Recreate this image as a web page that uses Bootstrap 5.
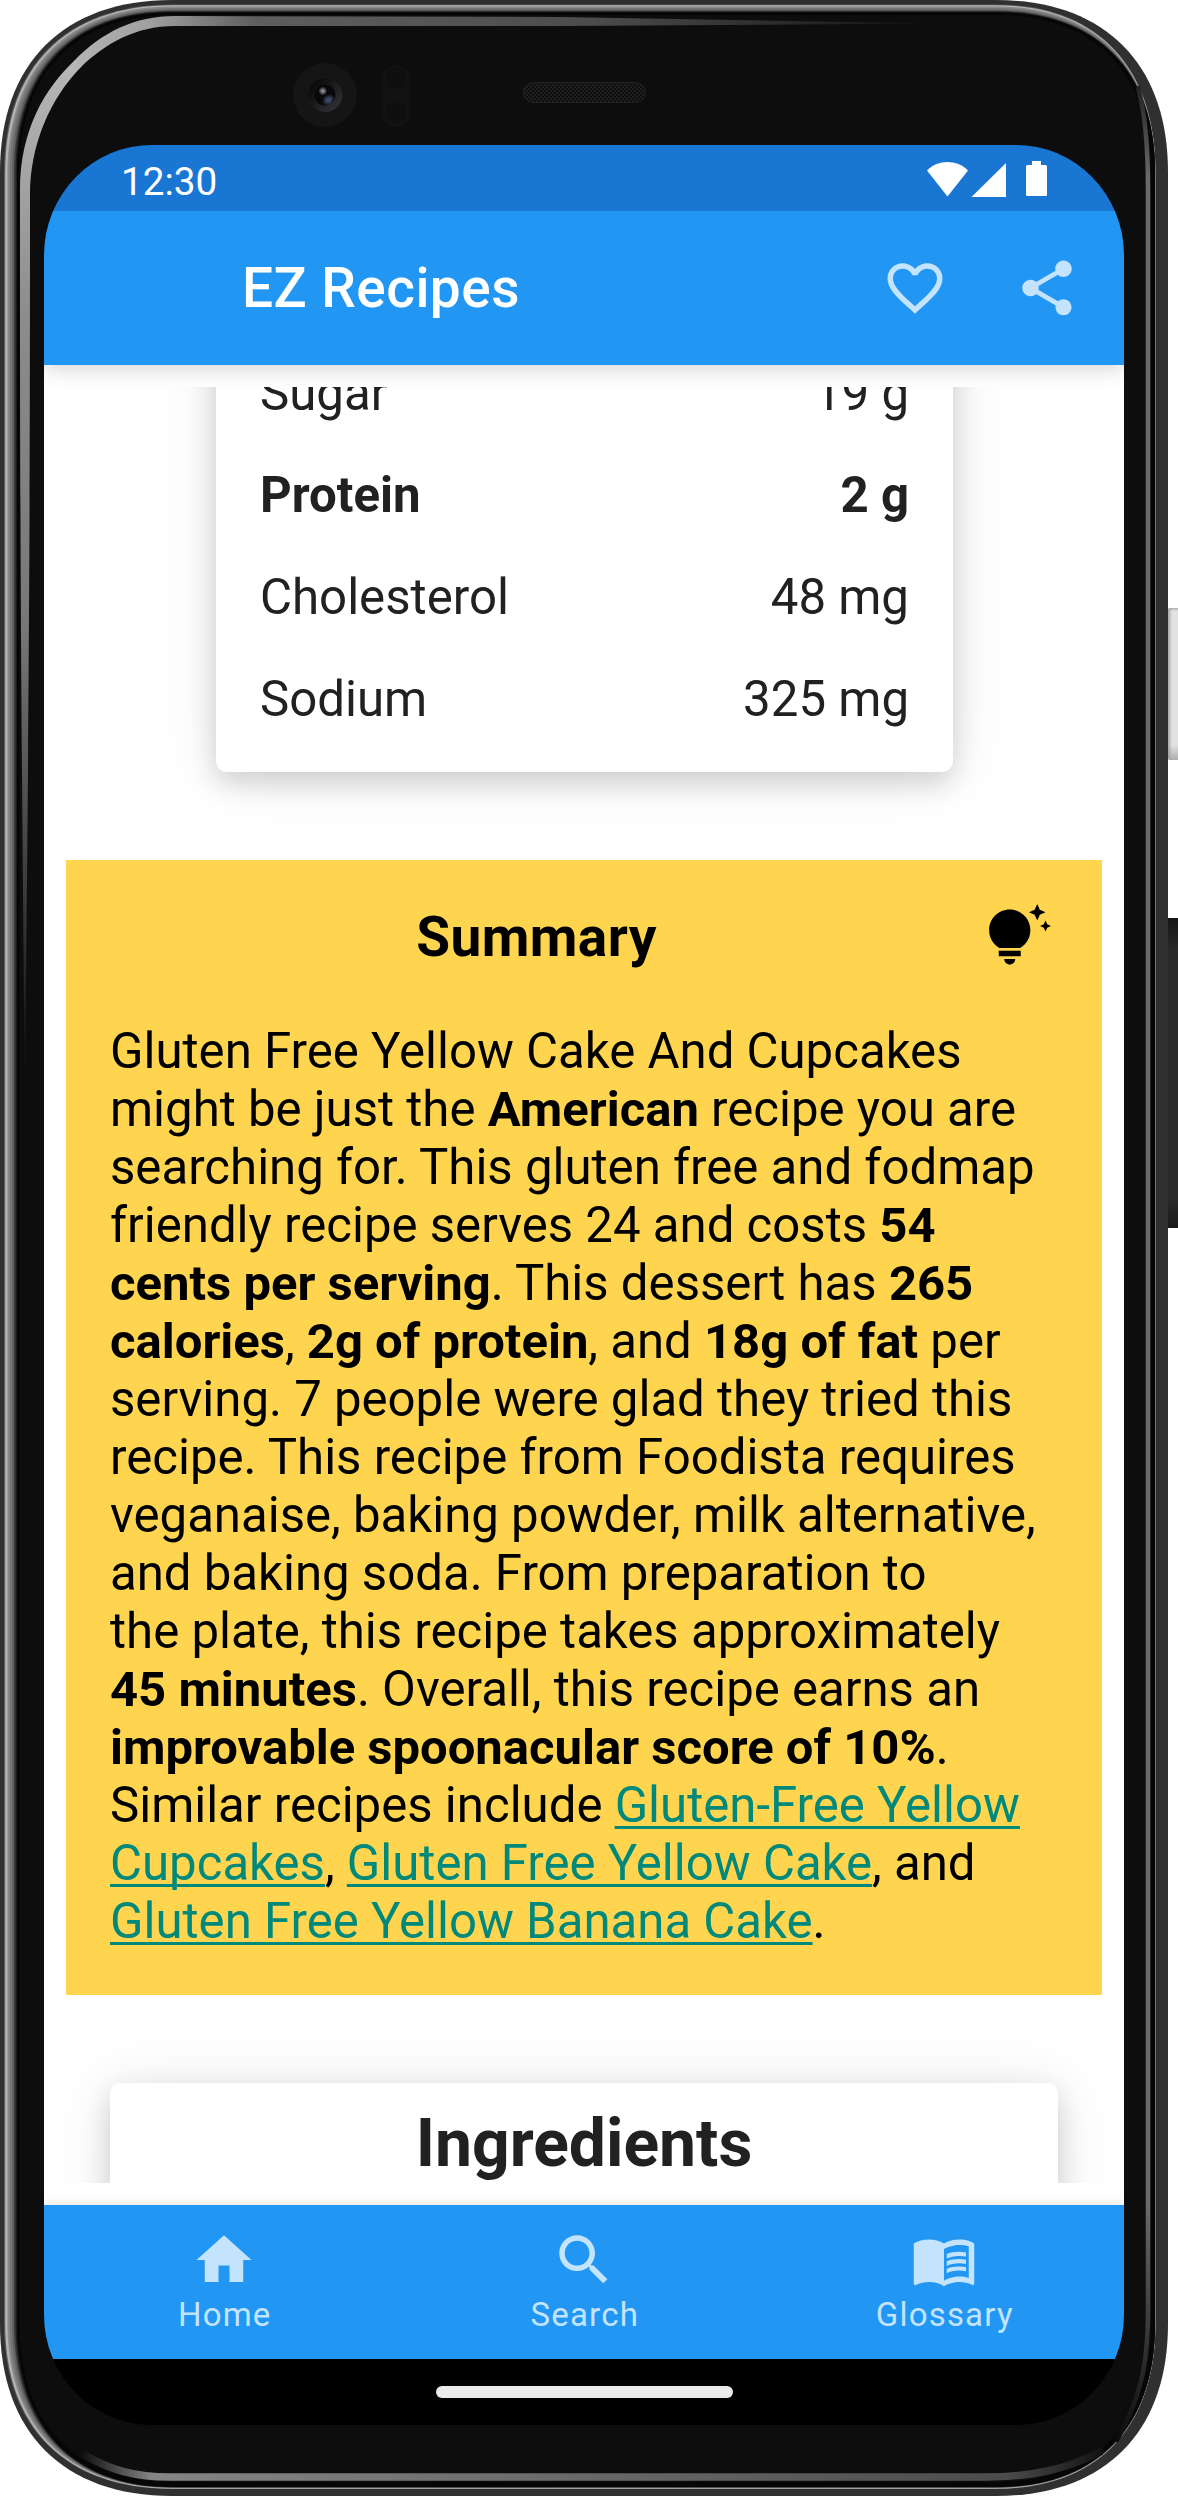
<!DOCTYPE html>
<html lang="en">
<head>
<meta charset="utf-8">
<meta name="viewport" content="width=device-width, initial-scale=1">
<title>EZ Recipes</title>
<link href="https://cdn.jsdelivr.net/npm/bootstrap@5.3.0/dist/css/bootstrap.min.css" rel="stylesheet">
<style>
html, body { margin: 0; overflow: hidden; background: #fff; }
body { font-family: Roboto, sans-serif; color: #212121; }
.stage { width: 1178px; height: 2496px; padding: 145px 54px 71px 44px; }
.device { left: 0; top: 0; }
.screen { width: 1080px; height: 2280px; border-radius: 108px / 110px; background: #000; z-index: 1; }
.status { height: 66px; background: #1976d2; color: #fff; padding: 6px 77px 0; font-size: 38.7px; line-height: 45px; }
.status svg { margin-top: -5px; }
.appbar { height: 154px; background: #2196f3; color: #fff; padding: 0 44px 0 198px; box-shadow: 0 2px 22px rgba(0,0,0,.2); clip-path: inset(0 0 -30px 0); }
.appbar-title { font-size: 55px; font-weight: 500; line-height: 64px; letter-spacing: .45px; }
.actions { gap: 66px; color: #c4e3fc; }
.content { height: 1840px; padding: 22px 0; }
.scroller { height: 1796px; padding: 0 22px; }
.elev { background: #fff; border-radius: 11px; box-shadow: 0 11px 27px rgba(0,0,0,.14), 0 3px 60px rgba(0,0,0,.1); }
.facts { width: 737px; height: 485px; margin-top: -100px; padding: 77px 43.5px 0 44.5px; font-size: 49.2px; line-height: 58px; }
.fact + .fact { margin-top: 44px; }
.summary { margin-top: 88px; height: 1135px; background: #ffd54f; color: #000; padding: 44px; }
.summary-head { height: 66px; margin-bottom: 51.5px; padding-right: 7px; }
.summary-title { font-size: 55px; font-weight: 700; line-height: 64px; letter-spacing: .4px; padding-right: 22px; }
.summary-text { font-size: 49.15px; line-height: 58px; white-space: nowrap; }
.summary-text b { font-size: 49px; line-height: 1; }
.summary-text a { color: #00897b; text-decoration-thickness: 3px; text-underline-offset: 4px; text-decoration-skip-ink: none; }
.ingredients { margin: 88px 44px 0; height: 200px; font-size: 66px; font-weight: 700; line-height: 77px; padding-top: 22px; }
.tabs { height: 154px; background: #2196f3; box-shadow: 0 -1px 10px rgba(0,0,0,.12); }
.tab { color: #c4e3fc; font-size: 33px; line-height: 39px; letter-spacing: 1.2px; padding-top: 22px; }
.tab svg { margin-bottom: 2px; }
.tab span { padding-left: 1.5px; }
.pill { width: 297px; height: 12px; border-radius: 6px; background: #ebebeb; }
.ico { width: 66px; height: 66px; fill: currentColor; flex: none; display: block; }
</style>
</head>
<body>
<div class="stage position-relative">

<svg class="device position-absolute" width="1178" height="2496" viewBox="0 0 1178 2496" aria-hidden="true">
  <defs>
    <linearGradient id="topfade" gradientUnits="userSpaceOnUse" x1="60" y1="0" x2="950" y2="0">
      <stop offset="0" stop-color="#b8b8b8"/><stop offset=".1" stop-color="#a0a0a0"/><stop offset=".22" stop-color="#5e5e5e"/><stop offset=".6" stop-color="#4c4c4c"/><stop offset="1" stop-color="#0d0d0e"/>
    </linearGradient>
    <linearGradient id="leftfade" gradientUnits="userSpaceOnUse" x1="0" y1="60" x2="0" y2="1090">
      <stop offset="0" stop-color="#b8b8b8"/><stop offset=".25" stop-color="#8c8c8c"/><stop offset=".55" stop-color="#777"/><stop offset="1" stop-color="#0d0d0e"/>
    </linearGradient>
    <linearGradient id="rightfade" gradientUnits="userSpaceOnUse" x1="0" y1="60" x2="0" y2="2440">
      <stop offset="0" stop-color="#0d0d0e"/><stop offset=".05" stop-color="#6b6b6b"/><stop offset=".9" stop-color="#6b6b6b"/><stop offset="1" stop-color="#0d0d0e"/>
    </linearGradient>
    <linearGradient id="botfade" gradientUnits="userSpaceOnUse" x1="80" y1="0" x2="1110" y2="0">
      <stop offset="0" stop-color="#0d0d0e"/><stop offset=".07" stop-color="#858585"/><stop offset=".5" stop-color="#686868"/><stop offset=".9" stop-color="#4c4c4c"/><stop offset="1" stop-color="#0d0d0e"/>
    </linearGradient>
    <linearGradient id="lens" x1="0" y1="0" x2="1" y2="1"><stop offset=".2" stop-color="#0c0c0d"/><stop offset="1" stop-color="#38383b"/></linearGradient>
    <radialGradient id="glint"><stop offset="0" stop-color="#aaa"/><stop offset="1" stop-color="#aaa" stop-opacity="0"/></radialGradient>
    <radialGradient id="blue"><stop offset=".3" stop-color="#3c4666"/><stop offset="1" stop-color="#3c4666" stop-opacity="0"/></radialGradient>
    <linearGradient id="keylight" x1="0" y1="0" x2="1" y2="0"><stop offset="0" stop-color="#a8a8a8"/><stop offset=".35" stop-color="#e2e2e2"/><stop offset="1" stop-color="#e0e0e0"/></linearGradient>
    <linearGradient id="keyends" x1="0" y1="0" x2="0" y2="1"><stop offset="0" stop-color="#999" stop-opacity=".7"/><stop offset=".02" stop-color="#999" stop-opacity="0"/><stop offset=".9" stop-color="#999" stop-opacity="0"/><stop offset="1" stop-color="#999" stop-opacity=".7"/></linearGradient>
    <linearGradient id="keydark" x1="0" y1="0" x2="0" y2="1"><stop offset="0" stop-color="#161616"/><stop offset=".1" stop-color="#2a2a2a"/><stop offset=".9" stop-color="#2a2a2a"/><stop offset="1" stop-color="#1a1a1a"/></linearGradient>
    <pattern id="mesh" width="4" height="4" patternUnits="userSpaceOnUse"><rect width="4" height="4" fill="#0e0e0e"/><rect width="2" height="2" fill="#202020"/><rect x="2" y="2" width="2" height="2" fill="#202020"/></pattern>
  </defs>
  <rect x="1168" y="608" width="12" height="152" rx="2" fill="url(#keylight)"/>
  <rect x="1168" y="608" width="12" height="152" rx="2" fill="url(#keyends)"/>
  <rect x="1160" y="918" width="20" height="310" rx="3" fill="url(#keydark)"/>
  <g id="shell"></g>
  <path fill="url(#leftfade)" d="M25 1090C20 620 20 420 20 190C20 130 45 88 75 60L82 66C50 98 30 145 30 195C30 420 30 620 25 1090Z"/>
  <path fill="url(#topfade)" d="M74.500 60.500C102 32 135 16 175 16L560 17L940 23.500L560 26L175 26C135 26 105 44 81.500 66.500Z"/>
  <g fill="none" stroke-linecap="round">
    <path stroke="url(#rightfade)" stroke-width="4.500" d="M1138 88C1146 115 1148 150 1148 190L1148 2310C1148 2365 1140 2400 1117 2440"/>
    <path stroke="url(#botfade)" stroke-width="7.500" d="M85 2455C110 2470 135 2477 170 2477L985 2477C1030 2477 1065 2470 1100 2452"/>
  </g>
  <circle cx="325" cy="95" r="32" fill="#151515"/>
  <circle cx="325.300" cy="95" r="17" fill="url(#lens)"/>
  <circle cx="325" cy="95" r="10.500" fill="#08080b"/>
  <ellipse cx="328.500" cy="100" rx="7" ry="5.500" fill="url(#blue)" transform="rotate(-35 328.500 100)"/>
  <circle cx="322.800" cy="91" r="4.500" fill="url(#glint)"/>
  <rect x="382" y="65" width="28" height="62" rx="14" fill="#121212"/>
  <circle cx="396" cy="78" r="11" fill="#0f0f0f"/><circle cx="396" cy="112" r="11" fill="#0f0f0f"/>
  <rect x="523.500" y="82.500" width="122" height="20" rx="10" fill="url(#mesh)" stroke="#222"/>
</svg>

<div class="screen position-relative d-flex flex-column overflow-hidden">
  <div class="status d-flex align-items-center justify-content-between">
    <span>12:30</span>
    <svg width="120" height="36" viewBox="0 0 120 36" fill="#fff" aria-hidden="true">
      <path d="M0 9.500C11-1.800 30-1.800 41 9.500L20.500 35.500Z"/><path d="M44.500 36L79 2V36Z"/>
      <path d="M105 0h9v4h4.500a1.500 1.500 0 0 1 1.500 1.500v28a1.500 1.500 0 0 1-1.500 1.500h-18a1.500 1.500 0 0 1-1.500-1.500v-28a1.500 1.500 0 0 1 1.500-1.500h4.500z"/>
    </svg>
  </div>
  <header class="appbar d-flex align-items-center justify-content-between">
    <span class="appbar-title">EZ Recipes</span>
    <div class="actions d-flex">
      <svg class="ico" viewBox="0 0 24 24"><path d="M16.500 3c-1.740 0-3.410.81-4.500 2.090C10.910 3.810 9.240 3 7.500 3 4.420 3 2 5.420 2 8.500c0 3.780 3.400 6.860 8.550 11.540L12 21.350l1.450-1.320C18.600 15.360 22 12.280 22 8.500 22 5.420 19.580 3 16.500 3zm-4.400 15.550l-.1.100-.1-.1C7.140 14.240 4 11.390 4 8.500 4 6.500 5.500 5 7.500 5c1.540 0 3.040.99 3.570 2.360h1.870C13.460 5.990 14.960 5 16.500 5c2 0 3.500 1.500 3.500 3.500 0 2.890-3.140 5.740-7.900 10.050z"/></svg>
      <svg class="ico" viewBox="0 0 24 24"><path d="M18 16.080c-.76 0-1.440.3-1.960.77L8.910 12.700c.05-.23.09-.46.09-.7s-.04-.47-.09-.7l7.050-4.110c.54.5 1.250.81 2.040.81 1.660 0 3-1.340 3-3s-1.340-3-3-3-3 1.340-3 3c0 .24.04.47.09.7L8.040 9.810C7.500 9.310 6.790 9 6 9c-1.660 0-3 1.340-3 3s1.340 3 3 3c.79 0 1.500-.31 2.040-.81l7.120 4.160c-.05.21-.08.43-.08.65 0 1.610 1.310 2.920 2.920 2.920s2.920-1.310 2.920-2.920-1.310-2.920-2.920-2.920z"/></svg>
    </div>
  </header>

  <main class="content bg-white">
    <div class="scroller overflow-hidden">
      <div class="facts elev mx-auto">
        <div class="fact d-flex justify-content-between"><span>Sugar</span><span>19 g</span></div>
        <div class="fact d-flex justify-content-between fw-bold"><span>Protein</span><span>2 g</span></div>
        <div class="fact d-flex justify-content-between"><span>Cholesterol</span><span>48 mg</span></div>
        <div class="fact d-flex justify-content-between"><span>Sodium</span><span>325 mg</span></div>
      </div>

      <section class="summary">
        <div class="summary-head d-flex align-items-center">
          <div class="summary-title text-center flex-fill">Summary</div>
          <svg class="ico" viewBox="0 0 24 24"><path d="M7 20h4c0 1.100-.9 2-2 2s-2-.9-2-2zm-2-1h8v-2H5v2zm11.500-9.500c0 3.820-2.660 5.860-3.770 6.500H5.270C4.160 15.360 1.500 13.320 1.500 9.500 1.500 5.360 4.860 2 9 2s7.500 3.360 7.500 7.500zm4.870-2.130L20 8l1.370.63L22 10l.63-1.370L24 8l-1.370-.63L22 6l-.63 1.370zM19 6l.94-2.060L22 3l-2.060-.94L19 0l-.94 2.060L16 3l2.060.94L19 6z"/></svg>
        </div>
        <p class="summary-text mb-0">Gluten Free Yellow Cake And Cupcakes<br>might be just the <b>American</b> recipe you are<br>searching for. This gluten free and fodmap<br>friendly recipe serves 24 and costs <b>54<br>cents per serving</b>. This dessert has <b>265<br>calories</b>, <b>2g of protein</b>, and <b>18g of fat</b> per<br>serving. 7 people were glad they tried this<br>recipe. This recipe from Foodista requires<br>veganaise, baking powder, milk alternative,<br>and baking soda. From preparation to<br>the plate, this recipe takes approximately<br><b>45 minutes</b>. Overall, this recipe earns an<br><b>improvable spoonacular score of 10%</b>.<br>Similar recipes include <a href="#">Gluten-Free Yellow<br>Cupcakes</a>, <a href="#">Gluten Free Yellow Cake</a>, and<br><a href="#">Gluten Free Yellow Banana Cake</a>.</p>
      </section>

      <section class="ingredients elev text-center">Ingredients</section>
    </div>
  </main>

  <nav class="tabs row g-0 flex-shrink-0">
    <div class="tab col d-flex flex-column align-items-center"><svg class="ico" viewBox="0 0 24 24"><path d="M10 20v-6h4v6h5v-8h3L12 3 2 12h3v8z"/></svg><span>Home</span></div>
    <div class="tab col d-flex flex-column align-items-center"><svg class="ico" viewBox="0 0 24 24"><path d="M15.500 14h-.79l-.28-.27C15.410 12.590 16 11.110 16 9.500 16 5.910 13.090 3 9.500 3S3 5.910 3 9.500 5.910 16 9.500 16c1.610 0 3.090-.59 4.230-1.570l.27.28v.79l5 4.990L20.490 19l-4.990-5zm-6 0C7.010 14 5 11.990 5 9.500S7.010 5 9.500 5 14 7.010 14 9.500 11.990 14 9.500 14z"/></svg><span>Search</span></div>
    <div class="tab col d-flex flex-column align-items-center"><svg class="ico" viewBox="0 0 24 24"><path d="M21 5c-1.110-.35-2.330-.5-3.500-.5-1.950 0-4.050.4-5.500 1.500-1.450-1.100-3.550-1.500-5.500-1.500S2.450 4.900 1 6v14.650c0 .25.25.5.5.5.1 0 .15-.05.25-.05C3.100 20.450 5.050 20 6.500 20c1.950 0 4.050.4 5.500 1.500 1.350-.85 3.800-1.500 5.500-1.500 1.650 0 3.350.3 4.750 1.050.1.050.15.050.25.050.25 0 .5-.25.5-.5V6c-.6-.45-1.250-.75-2-1zm0 13.500c-1.100-.35-2.300-.5-3.500-.5-1.700 0-4.150.65-5.500 1.500V8c1.350-.85 3.800-1.500 5.500-1.500 1.200 0 2.400.15 3.500.5v11.500z"/><path d="M17.500 10.500c.88 0 1.730.09 2.500.26V9.240c-.79-.15-1.640-.24-2.500-.24-1.700 0-3.240.29-4.500.83v1.660c1.130-.64 2.700-.99 4.500-.99zM13 12.490v1.660c1.130-.64 2.700-.99 4.500-.99.88 0 1.730.09 2.500.26V11.900c-.79-.15-1.640-.24-2.500-.24-1.700 0-3.240.3-4.500.83zM17.500 14.330c-1.700 0-3.240.29-4.500.83v1.660c1.130-.64 2.700-.99 4.500-.99.88 0 1.730.09 2.500.26v-1.520c-.79-.16-1.640-.24-2.500-.24z"/></svg><span>Glossary</span></div>
  </nav>
  <div class="flex-fill d-flex align-items-center justify-content-center"><div class="pill"></div></div>
</div>
</div>
<script src="https://cdn.jsdelivr.net/npm/bootstrap@5.3.0/dist/js/bootstrap.bundle.min.js"></script>
<script>
// Nested shell outlines, outermost first: left, top, right and bottom inset, then fill.
const layers = [
  [0, 0, 0, 0, '#303030'],
  [4, 4.5, 12.5, 7, '#5c5c5c'],
  [5.2, 5.2, 12.6, 7.3, '#b4b4b4'],
  [7.5, 6.5, 12.7, 8, '#8a8a8a'],
  [9.5, 8, 12.8, 8.3, '#767676'],
  [12, 9.5, 12.9, 8.5, '#606060'],
  [14, 10.7, 13, 8.7, '#3c3c3c'],
  [15.5, 11.5, 13, 8.8, '#1c1c1c'],
  [17, 12.3, 13, 9, '#060606'],
  [19.5, 15, 17, 14, '#0d0d0e']
];
document.getElementById('shell').innerHTML = layers.map(([l, t, r, b, fill]) => {
  const x1 = 1168 - r, y1 = 2496 - b;
  const c = 172, a = 63.5;
  return `<path fill="${fill}" d="M${l} ${c}C${l} ${a + t * .6} ${a + l * .6} ${t} ${c} ${t}`
    + `H${1168 - c}C${1168 - a - r * .6} ${t} ${x1} ${a + t * .6} ${x1} ${c}`
    + `V${2496 - c}C${x1} ${2496 - a - b * .6} ${1168 - a - r * .6} ${y1} ${1168 - c} ${y1}`
    + `H${c}C${a + l * .6} ${y1} ${l} ${2496 - a - b * .6} ${l} ${2496 - c}Z"/>`;
}).join('');
</script>
</body>
</html>
